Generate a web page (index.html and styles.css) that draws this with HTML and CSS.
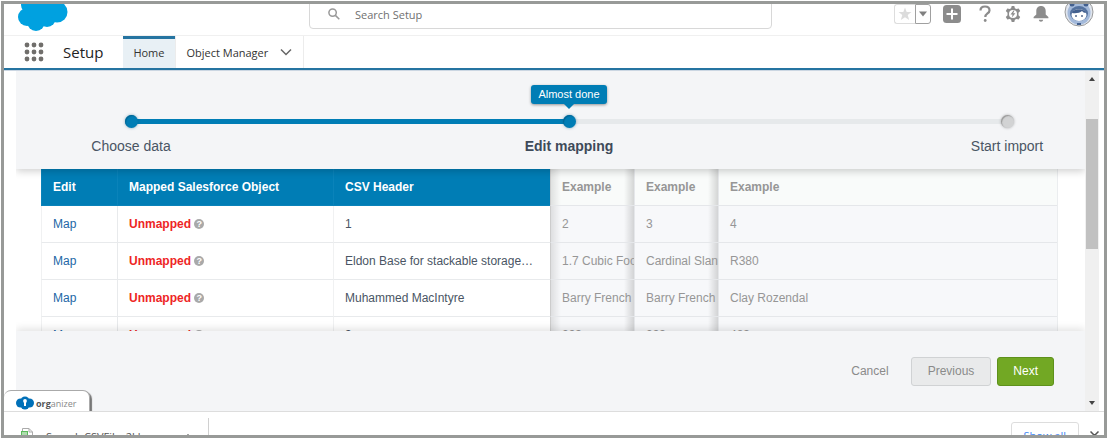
FILE: index.html
```html
<!DOCTYPE html>
<html lang="en">
<head>
<meta charset="utf-8">
<title>Data Import Wizard</title>
<link rel="stylesheet" href="styles.css">
</head>
<body>
<div class="frame">
  <header class="topbar">
    <svg class="logo" viewBox="0 0 50 34" aria-label="Salesforce" role="img"><g fill="#00a1e0"><circle cx="11" cy="7" r="8"/><circle cx="9" cy="19" r="9"/><circle cx="18" cy="24" r="9"/><circle cx="29" cy="20" r="9"/><circle cx="39" cy="14" r="10.500"/><circle cx="24" cy="10" r="14"/></g></svg>
    <div class="search">
      <svg viewBox="0 0 12 12" fill="none" stroke="#999" stroke-width="1.500"><circle cx="4.600" cy="4.600" r="3.700"/><path d="M7.400 7.400 11.300 11.300"/></svg>
      <input type="text" aria-label="Search Setup" placeholder="Search Setup">
    </div>
    <div class="tools">
      <div class="favorites">
        <button aria-label="Favorite"><svg width="14" height="14" viewBox="0 0 14 14"><path fill="#dcdcdc" d="M7 .5 8.700 5.100h4.800L9.700 8l1.500 5L7 10.200 2.800 13l1.500-5L.5 5.100h4.800z"/></svg></button>
        <button aria-label="Favorites list"><svg width="8" height="6" viewBox="0 0 8 6"><path fill="#808080" d="M0 .5h8L4 5.500z"/></svg></button>
      </div>
      <button class="tool add" aria-label="Add"><svg width="18" height="18" viewBox="0 0 18 18"><rect width="18" height="18" rx="3.500" fill="#8c8c8c"/><path d="M9 3.500v11M3.500 9h11" stroke="#fff" stroke-width="2"/></svg></button>
      <button class="tool help-button" aria-label="Help"><svg width="12" height="18" viewBox="0 0 12 18"><path d="M1.500 5.500C1.500 2.800 3.300 1.500 6 1.500s4.500 1.500 4.500 3.900C10.500 8.500 6.300 8.500 6.300 12" fill="none" stroke="#8c8c8c" stroke-width="2.200"/><circle cx="6.200" cy="15.500" r="1.400" fill="#8c8c8c"/></svg></button>
      <button class="tool" aria-label="Settings"><svg width="16" height="18" viewBox="0 0 16 18"><path fill="#8c8c8c" d="M6.700 1h2.600l.6 2.300 1.500.8 2.300-.7 1.500 2.500-1.700 1.900v2.400l1.700 1.900-1.500 2.500-2.300-.7-1.500.8L9.300 17H6.700l-.6-2.300-1.500-.8-2.300.7-1.500-2.500 1.700-1.900V7.800L.8 5.900l1.500-2.500 2.300.7 1.500-.8z"/><circle cx="8" cy="9" r="4" fill="#fff"/><path fill="#8c8c8c" d="M8.500 5.500 5.500 9.500h2L7 12.500l3.400-4.200H8.200l1.300-2.800z"/></svg></button>
      <button class="tool" aria-label="Notifications"><svg width="16" height="18" viewBox="0 0 16 18"><path fill="#8c8c8c" d="M8 1C4.900 1 3.300 3.300 3.300 6v3.500L.6 12v1.200h14.800V12l-2.700-2.500V6C12.700 3.300 11.100 1 8 1zM5.800 14.700h4.400C10 16 9.200 16.700 8 16.700S6 16 5.800 14.700z"/></svg></button>
      <button class="avatar" aria-label="View profile"><svg width="30" height="30" viewBox="0 0 30 30"><circle cx="15" cy="15" r="14" fill="#dfe5ee" stroke="#9a9a9a"/><circle cx="15" cy="16" r="11.500" fill="#a3b9da"/><circle cx="8" cy="7" r="2.500" fill="#43608f"/><circle cx="22" cy="7" r="2.500" fill="#43608f"/><ellipse cx="15" cy="16.500" rx="9" ry="7.500" fill="#54729f"/><ellipse cx="15" cy="18" rx="7.500" ry="6" fill="#fff"/><path d="M8 16c1-5 13-5 14 0-2 0-3-1-4-2-2 2-6 2.500-10 2z" fill="#43608f"/><circle cx="12" cy="19" r="1" fill="#54698d"/><circle cx="18" cy="19" r="1" fill="#54698d"/><path d="M13 27h4" stroke="#43608f" stroke-width="2"/></svg></button>
    </div>
  </header>
  <nav class="navbar">
    <button class="launcher" aria-label="App Launcher"><svg width="20" height="20" viewBox="0 0 20 20" fill="#706e6b"><circle cx="3" cy="3" r="2.400"/><circle cx="10" cy="3" r="2.400"/><circle cx="17" cy="3" r="2.400"/><circle cx="3" cy="10" r="2.400"/><circle cx="10" cy="10" r="2.400"/><circle cx="17" cy="10" r="2.400"/><circle cx="3" cy="17" r="2.400"/><circle cx="10" cy="17" r="2.400"/><circle cx="17" cy="17" r="2.400"/></svg></button>
    <span class="app-name">Setup</span>
    <a class="tab active" href="#">Home</a>
    <a class="tab" href="#">Object Manager <svg width="12" height="8" viewBox="0 0 12 8" fill="none" stroke="#666" stroke-width="1.500"><path d="M1 1.500l5 5 5-5"/></svg></a>
  </nav>
  <main class="content">
    <section class="wizard">
      <div class="stepper">
        <ol class="steps">
          <li class="step done"><span class="dot"></span>Choose data</li>
          <li class="step done current"><span class="tip">Almost done</span><span class="dot"></span>Edit mapping</li>
          <li class="step"><span class="dot"></span>Start import</li>
        </ol>
      </div>
      <div class="table-area">
        <table class="mapping">
          <colgroup><col class="c-edit"><col class="c-object"><col class="c-header"><col class="c-example"><col class="c-example"><col></colgroup>
          <thead>
            <tr><th>Edit</th><th>Mapped Salesforce Object</th><th>CSV Header</th><th class="ex first">Example</th><th class="ex fold">Example</th><th class="ex last">Example</th></tr>
          </thead>
          <tbody>
            <tr><td><a href="#">Map</a></td><td><b class="unmapped">Unmapped</b> <span class="help">?</span></td><td>1</td><td class="ex first">2</td><td class="ex fold">3</td><td class="ex last">4</td></tr>
            <tr><td><a href="#">Map</a></td><td><b class="unmapped">Unmapped</b> <span class="help">?</span></td><td>Eldon Base for stackable storage…</td><td class="ex first">1.7 Cubic Foot</td><td class="ex fold">Cardinal Slant</td><td class="ex last">R380</td></tr>
            <tr><td><a href="#">Map</a></td><td><b class="unmapped">Unmapped</b> <span class="help">?</span></td><td>Muhammed MacIntyre</td><td class="ex first">Barry French</td><td class="ex fold">Barry French</td><td class="ex last">Clay Rozendal</td></tr>
            <tr><td><a href="#">Map</a></td><td><b class="unmapped">Unmapped</b> <span class="help">?</span></td><td>3</td><td class="ex first">293</td><td class="ex fold">293</td><td class="ex last">483</td></tr>
          </tbody>
        </table>
      </div>
      <footer class="actions">
        <button class="btn plain">Cancel</button>
        <button class="btn muted">Previous</button>
        <button class="btn primary">Next</button>
      </footer>
    </section>
    <div class="scrollbar" aria-hidden="true">
      <svg width="6" height="4" viewBox="0 0 6 4"><path d="M0 4h6L3 0z" fill="#444"/></svg>
      <div class="rail"><div class="thumb"></div></div>
      <svg width="6" height="4" viewBox="0 0 6 4"><path d="M0 0h6L3 4z" fill="#444"/></svg>
    </div>
    <button class="organizer"><svg width="18" height="14" viewBox="0 0 18 14"><g fill="#0070b8"><circle cx="4.500" cy="7" r="4.500"/><circle cx="9" cy="5" r="4.500"/><circle cx="9" cy="9" r="4.500"/><circle cx="13.500" cy="7" r="4.500"/></g><circle cx="9" cy="5" r="1.900" fill="#fff"/><path d="M8 5h2v5H8z" fill="#fff"/></svg><span><b>org</b>anizer</span></button>
  </main>
  <div class="downloads">
    <button class="file"><svg width="13" height="16" viewBox="0 0 13 16"><path d="M1.500.5H8L11.500 4v11.500h-10z" fill="#fff" stroke="#aaa"/><path d="M8 .5V4h3.500" fill="none" stroke="#aaa"/><path d="M0 3h7v7H0z" fill="#5cbb5c"/><path d="M1 5h5M1 7h5" stroke="#fff"/></svg><span>SampleCSVFile_2kb....csv</span><svg width="8" height="6" viewBox="0 0 8 6" fill="none" stroke="#555" stroke-width="1.500"><path d="M1 5l3-3 3 3"/></svg></button>
    <button class="show-all">Show all</button>
    <button class="close" aria-label="Close"><svg width="9" height="9" viewBox="0 0 9 9" stroke="#555" stroke-width="1.500"><path d="M.5.5l8 8M8.500.5l-8 8"/></svg></button>
  </div>
</div>
</body>
</html>
```
FILE: styles.css
```css
* { box-sizing: border-box; }
body { margin: 0; background: #fff; font-family: "Liberation Sans", Arial, sans-serif; font-size: 13px; color: #4a5564; }
button { border: 0; padding: 0; background: none; font: inherit; color: inherit; }
svg { display: block; flex: none; }
a { text-decoration: none; }

.frame { display: flex; flex-direction: column; height: calc(100vh - 2px); margin: 1px; border: 3px solid #989a98; overflow: hidden; }

.topbar { display: grid; grid-template: 100% / 305fr 463fr 332fr; align-items: end; height: 32px; overflow: hidden; border-bottom: 1px solid #f0f0f0; }
.logo { width: 50px; margin: 0 0 3px 14px; }
.search { display: flex; align-items: center; gap: 15px; height: 30px; margin-bottom: 6px; padding-left: 18px; border: 1px solid #d8d8d8; border-radius: 4px; }
.search svg { width: 12px; }
.search input { flex: 1; min-width: 0; border: 0; padding: 0; background: none; font-family: "Open Sans", sans-serif; font-size: 11px; }
.search input::placeholder { color: #707070; opacity: 1; }
.tools { display: flex; justify-content: flex-end; align-items: center; gap: 12px; height: 30px; margin-bottom: 6px; padding-right: 10px; }
.favorites { display: flex; height: 20px; }
.favorites button { display: flex; align-items: center; justify-content: center; width: 21px; border: 1px solid #ddd; border-right: 0; border-radius: 3px 0 0 3px; }
.favorites button + button { width: 16px; border: 1px solid #a0a0a0; border-radius: 0 3px 3px 0; }
.help-button { margin: 0 2px 0 6px; }
.avatar { margin: 0 0 4px 3px; }

.navbar { display: flex; align-items: stretch; height: 34px; border-bottom: 2px solid #2574a1; font-family: "Open Sans", sans-serif; font-size: 11px; color: #333; }
.launcher { margin-left: 20px; }
.app-name { display: flex; align-items: center; margin: 0 20px 0 19px; font-size: 15px; color: #222; }
.tab { display: flex; align-items: center; gap: 12px; padding: 0 11px 0 10px; color: #333; border-right: 1px solid #ececec; }
.tab.active { background: #e8f0f5; box-shadow: inset 0 3px #2574a1; }

.content { position: relative; display: flex; flex: 1; min-height: 0; border-top: 1px solid #cbd6e2; padding: 0 5px 0 12px; }
.wizard { display: flex; flex-direction: column; flex: 1; min-width: 0; }
.stepper { position: relative; z-index: 1; height: 98px; padding: 44px 28px 0 65px; background: #f4f5f7; box-shadow: 0 2px 8px rgba(0, 0, 0, .2); clip-path: inset(0 0 -12px 0); }
.steps { position: relative; display: flex; justify-content: space-between; margin: 0; padding: 0; list-style: none; }
.steps::before { content: ""; position: absolute; top: 4px; left: 50px; right: 50px; height: 5px; background: linear-gradient(90deg, #007db5 50%, #e6e9eb 50%); }
.step { position: relative; display: flex; flex-direction: column; align-items: center; gap: 10px; width: 100px; font-size: 14px; line-height: 16px; }
.dot { width: 13px; height: 13px; border-radius: 50%; background: #d2d3d4; box-shadow: inset 1px 1px 1px #999, 0 0 3px rgba(0, 0, 0, .3); }
.done .dot { background: #007db5; box-shadow: inset 1px 1px 1px #006594, 0 0 3px rgba(0, 90, 130, .5); }
.current { font-weight: bold; color: #3e4a59; }
.tip { position: absolute; bottom: 50px; padding: 0 7px; border-radius: 3px; background: #007db5; box-shadow: 0 1px 3px rgba(0, 0, 0, .4); color: #fff; font-size: 11px; font-weight: normal; line-height: 19px; white-space: nowrap; }
.tip::after { content: ""; position: absolute; top: 100%; left: 50%; margin-left: -5px; border: 5px solid transparent; border-top-color: #007db5; border-bottom: 0; }

.table-area { flex: 1; min-height: 0; overflow: hidden; padding: 0 27px 0 25px; }
.mapping { width: 100%; table-layout: fixed; border-collapse: separate; border-spacing: 0; border-right: 1px solid #ebedef; }
.c-edit { width: 76px; }
.c-object { width: 216px; }
.c-header { width: 217px; }
.c-example { width: 84px; }
.mapping th, .mapping td { height: 37px; padding: 0 0 0 11px; text-align: left; white-space: nowrap; overflow: hidden; border-bottom: 1px solid #e8eaec; border-left: 1px solid #f0f1f2; font-size: 12px; }
.mapping th { background-color: #007db5; border-color: #0a83ba; color: #fff; }
.mapping td:nth-child(2) { border-left-color: #e8eaec; }
.mapping td a { color: #2267a6; }
.unmapped { color: #ee2525; }
.help { display: inline-block; width: 10px; height: 10px; border-radius: 50%; background: #a9a9a9; color: #fff; font-size: 9px; font-weight: bold; line-height: 10px; text-align: center; vertical-align: 1px; }
.mapping .ex { color: #969696; border-color: #e5e7ea; background-color: #f7f8fa; }
.mapping th.ex { background-color: #f9fbfa; }
.mapping .first { background-image: linear-gradient(90deg, rgba(0, 0, 0, .1), transparent 10px), linear-gradient(270deg, rgba(0, 0, 0, .15), transparent 10px); border-left-color: #ccc; }
.mapping .fold { background-image: linear-gradient(270deg, rgba(0, 0, 0, .15), transparent 10px); }

.actions { position: relative; z-index: 1; display: flex; justify-content: flex-end; align-items: center; gap: 6px; height: 80px; padding-right: 31px; background: #f4f5f7; box-shadow: 0 -2px 8px rgba(0, 0, 0, .12); clip-path: inset(-12px 0 0 0); }
.btn { height: 29px; padding: 0 15px; border: 1px solid transparent; border-radius: 3px; font-size: 12px; line-height: 16px; color: #8a8a8a; }
.btn.muted { padding: 0 16px; border-color: #d0d2d4; background: #e9eaeb; }
.btn.primary { border-color: #5e911c; background: #72a824; color: #fff; }

.scrollbar { display: flex; flex-direction: column; align-items: center; gap: 6px; width: 14px; padding: 6px 0; background: #f0f0f0; }
.rail { flex: 1; width: 12px; padding-top: 32px; }
.thumb { height: 47%; background: #c1c1c1; }

.organizer { position: absolute; left: 0; bottom: 0; z-index: 2; display: flex; align-items: center; gap: 2px; height: 21px; padding: 4px 12px 0 12px; border: 1px solid #aaa; border-bottom: 0; border-left: 0; border-radius: 7px 7px 0 0; background: #fff; box-shadow: 2px 2px 1px #777; font-family: "Open Sans", sans-serif; font-size: 9px; color: #888; clip-path: inset(0 -4px 0 0); }
.organizer b { color: #555; }

.downloads { display: flex; align-items: flex-start; height: 24px; border-top: 1px solid #ddd; overflow: hidden; font-family: "Open Sans", sans-serif; font-size: 11px; }
.file { display: flex; align-items: center; gap: 12px; height: 36px; margin-top: 6px; padding: 0 16px 0 17px; border-right: 1px solid #d0d0d0; color: #555; }
.show-all { margin: 10px 11px 0 auto; padding: 0 12px; height: 26px; border: 1px solid #ddd; border-radius: 3px; color: #4285f4; }
.close { margin: 19px 5px 0 0; }
```
